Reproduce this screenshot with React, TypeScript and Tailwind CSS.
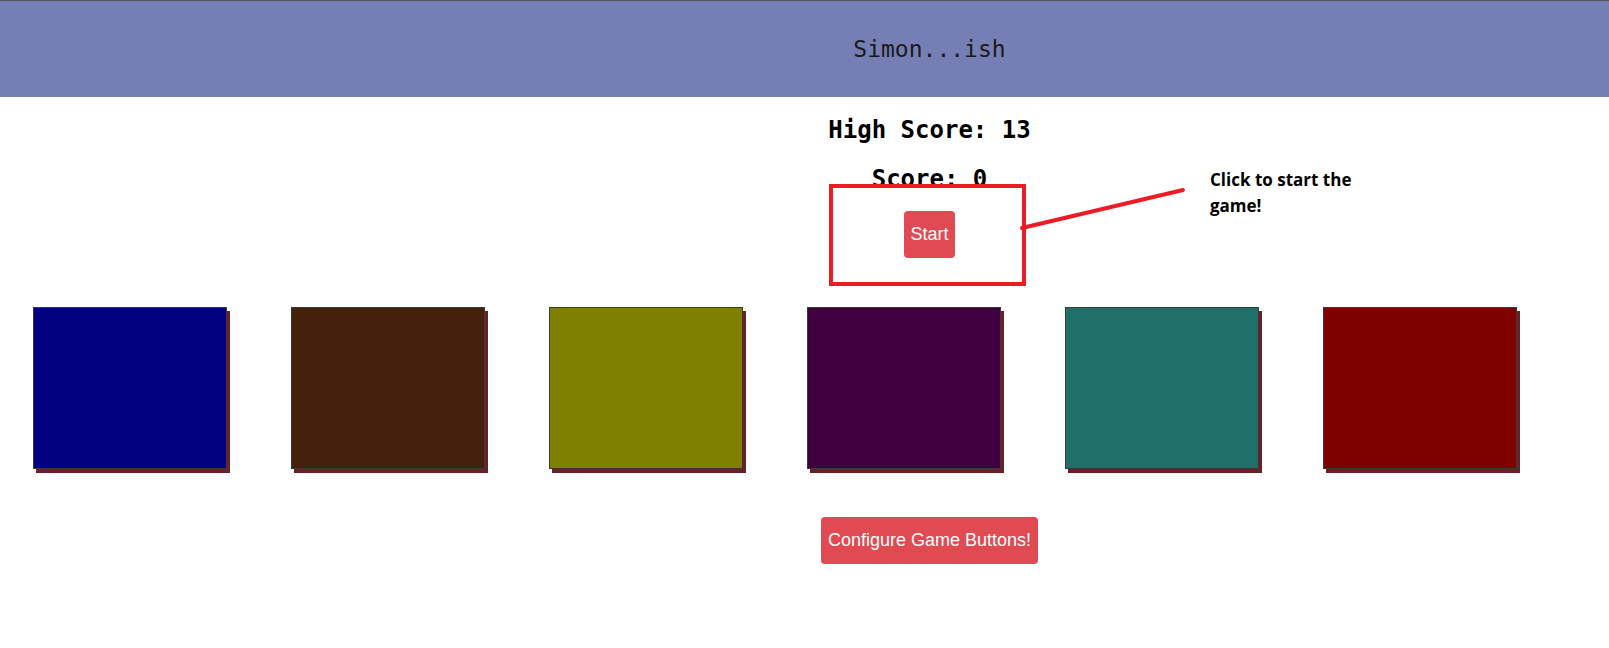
const pads = [
  { name: "blue", color: "bg-[#000080]" },
  { name: "brown", color: "bg-[#45210c]" },
  { name: "olive", color: "bg-[#808000]" },
  { name: "purple", color: "bg-[#400040]" },
  { name: "teal", color: "bg-[#206f68]" },
  { name: "maroon", color: "bg-[#800000]" },
];

const App: React.FC = () => {
  return (
    <div className="relative min-h-screen bg-white">
      <header className="flex h-[97px] items-center justify-center border-t border-[#555555] bg-[#757fb6] pl-[250px]">
        <h1 className="font-['DejaVu_Sans_Mono',monospace] text-[23px] leading-[28px] text-[#1a1a1a]">Simon...ish</h1>
      </header>

      <div className="flex flex-col items-center pl-[250px] font-['DejaVu_Sans_Mono',monospace] text-[24px] font-bold leading-[28px] text-black">
        <h3 className="mt-[19px]">High Score: 13</h3>
        <h3 className="mt-[21px]">Score: 0</h3>
        <button className="mt-[18px] rounded bg-[#e04a52] px-[6px] py-[13px] font-['Liberation_Sans',sans-serif] text-[18px] font-normal leading-[21px] text-white">
          Start
        </button>
      </div>

      <div className="mt-[49px] flex gap-[64px] pl-[33px]">
        {pads.map((pad) => (
          <div
            key={pad.name}
            className={`h-[162px] w-[194px] border border-[#3a3a3a] shadow-[3px_4px_0_#6b1f26] ${pad.color}`}
          />
        ))}
      </div>

      <div className="mt-[48px] flex justify-center pl-[250px]">
        <button className="rounded bg-[#e04a52] px-[7px] py-[13px] font-['Liberation_Sans',sans-serif] text-[18px] leading-[21px] text-white">
          Configure Game Buttons!
        </button>
      </div>

      {/* tutorial annotation drawn over the page */}
      <div className="absolute left-[829px] top-[184px] h-[102px] w-[197px] border-4 border-[#ed1c24]" />
      <svg className="absolute left-[1018px] top-[184px]" width="170" height="50" viewBox="0 0 170 50">
        <line x1="4" y1="44" x2="165" y2="6" stroke="#ed1c24" strokeWidth="4" strokeLinecap="round" />
      </svg>
      <p className="absolute left-[1210px] top-[167px] w-[170px] font-['Open_Sans',sans-serif] text-[17px] font-bold leading-[26px] text-black">
        Click to start the game!
      </p>
    </div>
  );
};

export default App;
